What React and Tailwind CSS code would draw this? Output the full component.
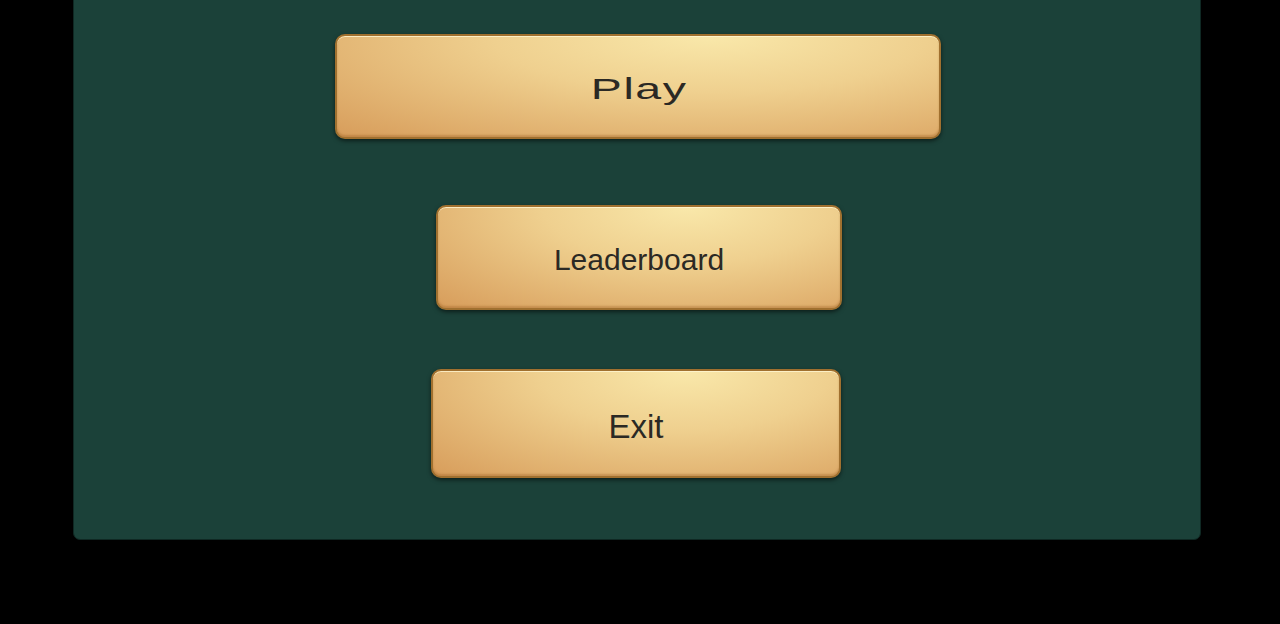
import React from 'react';

const btnBase =
  "flex items-center justify-center rounded-[10px] border-2 border-[#a0702f] text-[#2b2924] shadow-[0_2px_4px_rgba(0,0,0,0.55),inset_0_1px_0_rgba(255,246,210,0.8),inset_0_-2px_2px_rgba(150,90,30,0.35)] bg-[radial-gradient(ellipse_90%_140%_at_62%_0%,#f9e8aa_0%,#efd08f_40%,#d79c5a_100%)]";

const MenuButton = ({ label, className, textClass }) => (
  <button className={`${btnBase} ${className}`} style={{ fontFamily: '"Liberation Sans", Arial, sans-serif' }}>
    <span className={textClass}>{label}</span>
  </button>
);

export default function App() {
  return (
    <div className="w-[1280px] h-[624px] bg-black overflow-hidden">
      <div className="ml-[73px] mt-[-12px] w-[1128px] h-[552px] rounded-[7px] bg-[#1b4139] border border-[#0f2823] shadow-[0_2px_6px_rgba(0,0,0,0.6)] flex flex-col items-center">
        <MenuButton
          label="Play"
          className="mt-[45px] w-[606px] h-[105px] translate-x-[1px]"
          textClass="text-[30px] tracking-[1px] inline-block scale-x-[1.55] translate-y-[2px] translate-x-[1px]"
        />
        <MenuButton
          label="Leaderboard"
          className="mt-[66px] w-[406px] h-[105px] translate-x-[2px]"
          textClass="text-[30px] translate-y-[2px]"
        />
        <MenuButton
          label="Exit"
          className="mt-[59px] w-[410px] h-[109px] -translate-x-[1px]"
          textClass="text-[33px] translate-y-[3px]"
        />
      </div>
    </div>
  );
}
